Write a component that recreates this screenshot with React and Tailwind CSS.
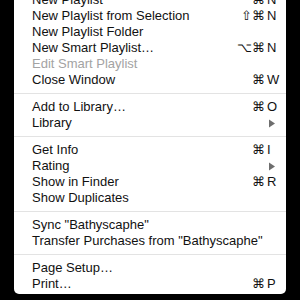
import React from 'react';

const sections = [
  [
    { label: 'New Playlist', mod: '⌘', key: 'N' },
    { label: 'New Playlist from Selection', mod: '⇧⌘', key: 'N' },
    { label: 'New Playlist Folder' },
    { label: 'New Smart Playlist…', mod: '⌥⌘', key: 'N' },
    { label: 'Edit Smart Playlist', disabled: true },
    { label: 'Close Window', mod: '⌘', key: 'W' },
  ],
  [
    { label: 'Add to Library…', mod: '⌘', key: 'O' },
    { label: 'Library', submenu: true },
  ],
  [
    { label: 'Get Info', mod: '⌘', key: 'I' },
    { label: 'Rating', submenu: true },
    { label: 'Show in Finder', mod: '⌘', key: 'R' },
    { label: 'Show Duplicates' },
  ],
  [
    { label: 'Sync "Bathyscaphe"' },
    { label: 'Transfer Purchases from "Bathyscaphe"' },
  ],
  [
    { label: 'Page Setup…' },
    { label: 'Print…', mod: '⌘', key: 'P' },
  ],
];

function MenuItem({ item }) {
  return (
    <div className="flex h-4 items-center pl-[18px] pr-[9px]">
      <span className={`flex-1 whitespace-nowrap ${item.disabled ? 'text-[#a3a3a3]' : 'text-[#111]'}`}>
        {item.label}
      </span>
      {item.mod && (
        <span className="flex text-[#111]">
          <span className="text-right">{item.mod}</span>
          <span className="w-[12px] pl-[2px] text-left">{item.key}</span>
        </span>
      )}
      {item.submenu && (
        <svg width="12" height="9" viewBox="0 0 12 9" className="mr-[1px]">
          <path d="M5 0.5 L11 4.5 L5 8.5 Z" fill="#6e6e6e" />
        </svg>
      )}
    </div>
  );
}

export default function App() {
  return (
    <div className="h-[300px] w-[300px] overflow-hidden bg-black" style={{ fontFamily: '"Liberation Sans", Arial, sans-serif' }}>
      <div className="ml-[14px] w-[272px] -mt-2 rounded-b-[5px] bg-white pb-[2px] pt-0 text-[13px] leading-4">
        {sections.map((section, i) => (
          <div key={i}>
            {i > 0 && <div className="my-[5px] h-px bg-[#e3e3e3]" />}
            {section.map((item) => (
              <MenuItem key={item.label} item={item} />
            ))}
          </div>
        ))}
      </div>
    </div>
  );
}
